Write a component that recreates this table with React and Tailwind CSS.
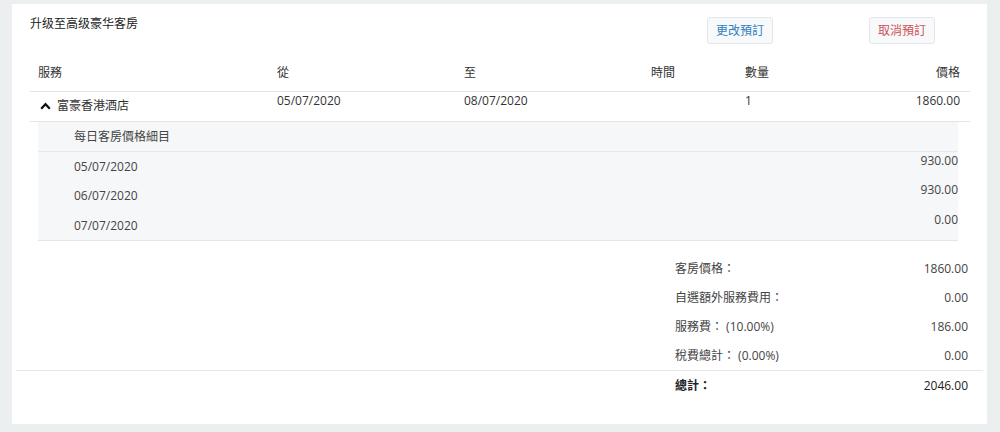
const font = { fontFamily: '"Open Sans", "Noto Sans CJK TC", sans-serif' };

const dailyRates = [
  { date: '05/07/2020', price: '930.00', h: 'h-[29px]' },
  { date: '06/07/2020', price: '930.00', h: 'h-[30px]' },
  { date: '07/07/2020', price: '0.00', h: 'h-[29px]' }
];

const summary = [
  { label: '客房價格：', value: '1860.00' },
  { label: '自選額外服務費用：', value: '0.00' },
  { label: '服務費： (10.00%)', value: '186.00' },
  { label: '稅費總計： (0.00%)', value: '0.00' }
];

const cols = 'grid grid-cols-[239px_187px_187px_94px_1fr_1fr]';

const App = () => {
  return (
    <div className="w-[1000px] h-[432px] bg-[#eceff0] pt-[4px] pl-[12px] overflow-hidden" style={font}>
      <div className="w-[975px] h-[420px] bg-white text-[12px] leading-[18px] text-[#333]">
        {/* Title + actions */}
        <div className="flex items-start pt-[11px] pl-[18px] pr-[52px]">
          <div className="text-[12px] text-[#222]">升级至高级豪华客房</div>
          <div className="ml-auto flex gap-[96px] mt-[2px]">
            <button className="w-[66px] h-[27px] bg-[#f8f9fa] border border-[#e3e6ea] rounded-[3px] text-[#2f7fc2] text-[12px]">
              更改預訂
            </button>
            <button className="w-[66px] h-[27px] bg-[#f8f9fa] border border-[#e3e6ea] rounded-[3px] text-[#cf5258] text-[12px]">
              取消預訂
            </button>
          </div>
        </div>

        {/* Table */}
        <div className="mx-[18px] w-[940px]">
          <div className={`${cols} h-[48px] items-end pb-[9px] border-b border-[#e3e5e8]`}>
            <div className="pl-[8px]">服務</div>
            <div className="pl-[8px]">從</div>
            <div className="pl-[8px]">至</div>
            <div className="pl-[8px]">時間</div>
            <div className="pl-[8px]">數量</div>
            <div className="pr-[10px] text-right">價格</div>
          </div>

          <div className={`${cols} h-[30px] items-start border-b border-[#e3e5e8]`}>
            <div className="pl-[10px] pt-[5px] flex items-center gap-[6px]">
              <svg width="11" height="8" viewBox="0 0 11 8" className="shrink-0">
                <path d="M1.2 6.8 L5.5 2.2 L9.8 6.8" fill="none" stroke="#111" strokeWidth="2.2" />
              </svg>
              <span>富豪香港酒店</span>
            </div>
            <div className="pl-[8px]">05/07/2020</div>
            <div className="pl-[8px]">08/07/2020</div>
            <div className="pl-[8px]"></div>
            <div className="pl-[8px]">1</div>
            <div className="pr-[10px] text-right">1860.00</div>
          </div>

          {/* Daily breakdown */}
          <div className="ml-[8px] mr-[12px] bg-[#f6f7f9] border-b border-[#e3e5e8] text-[#444]">
            <div className="h-[30px] flex items-center pl-[36px] border-b border-[#e6e8eb]">每日客房價格細目</div>
            {dailyRates.map((r) => (
              <div key={r.date} className={`${r.h} flex items-start`}>
                <div className="pl-[36px] self-center">{r.date}</div>
                <div className="ml-auto">{r.price}</div>
              </div>
            ))}
          </div>
        </div>

        {/* Summary */}
        <div className="mx-[4px] mt-[13px] text-[#444]">
          <div className="border-b border-[#e6e8eb]">
            {summary.map((s) => (
              <div key={s.label} className="h-[29px] flex items-center justify-end pr-[15px]">
                <div className="w-[293px] flex">
                  <span>{s.label}</span>
                  <span className="ml-auto">{s.value}</span>
                </div>
              </div>
            ))}
          </div>
          <div className="h-[29px] flex items-center justify-end pr-[15px]">
            <div className="w-[293px] flex text-[#222]">
              <span className="font-semibold">總計：</span>
              <span className="ml-auto font-medium">2046.00</span>
            </div>
          </div>
        </div>
      </div>
    </div>
  );
};

export default App;
